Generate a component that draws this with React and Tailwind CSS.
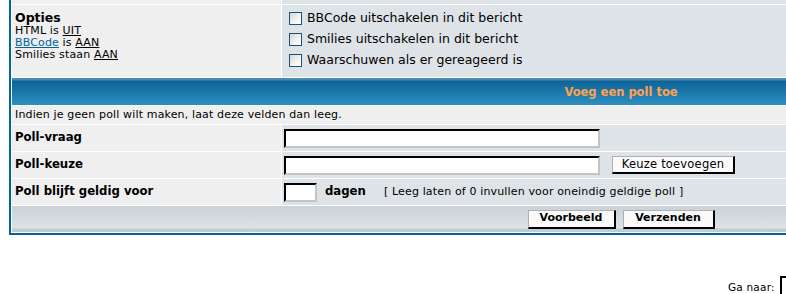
export default function App() {
  const font = "font-['DejaVu_Sans',Verdana,sans-serif]";
  const Check = () => (
    <span className="inline-block w-[13px] h-[13px] border border-[#1c5180] bg-[linear-gradient(135deg,#d6d6d0_0%,#f4f4f0_60%,#ffffff_100%)] shrink-0" />
  );
  const inputCls =
    "bg-white border-t-2 border-l-2 border-b-2 border-r-2 border-t-black border-l-black border-b-[#c4c4c4] border-r-[#c4c4c4]";
  const btnCls =
    "bg-[#fafafa] border-t border-l border-t-[#b0b0b0] border-l-[#b0b0b0] border-b-2 border-r-2 border-b-black border-r-black flex items-center justify-center text-black whitespace-nowrap";
  const small = "text-[11px] tracking-[0.15px]";
  const label = "text-[11.7px] font-bold";
  return (
    <div className={`w-[786px] h-[294px] overflow-hidden bg-white relative ${font}`}>
      <div className="ml-[9px] w-[1224px] border-l-2 border-r-2 border-b-2 border-[#006699] bg-white flex flex-col gap-px px-px pb-px">
        {/* partial top row */}
        <div className="grid grid-cols-[269px_1fr] gap-px h-[4px]">
          <div className="bg-[#efefef]" />
          <div className="bg-[#dee3e7]" />
        </div>
        {/* Opties */}
        <div className="grid grid-cols-[269px_1fr] gap-px h-[72px]">
          <div className="bg-[#efefef] pt-[6px] pl-[3px] text-black">
            <div className="text-[12.5px] font-bold leading-[14px]">Opties</div>
            <div className={`${small} leading-[12px]`}>
              HTML is <span className="underline">UIT</span>
            </div>
            <div className={`${small} leading-[12px]`}>
              <span className="underline text-[#006699]">BBCode</span> is <span className="underline">AAN</span>
            </div>
            <div className={`${small} leading-[12px]`}>
              Smilies staan <span className="underline">AAN</span>
            </div>
          </div>
          <div className="bg-[#dee3e7] pt-[3px] pl-[7px] flex flex-col">
            {[
              "BBCode uitschakelen in dit bericht",
              "Smilies uitschakelen in dit bericht",
              "Waarschuwen als er gereageerd is",
            ].map((t) => (
              <div key={t} className="h-[21px] flex items-center gap-[5px] text-[12.5px] text-black">
                <Check />
                <span>{t}</span>
              </div>
            ))}
          </div>
        </div>
        {/* header */}
        <div className="h-[27px] bg-[linear-gradient(to_bottom,#4a89b0_0px,#4a89b0_2px,#0c6397_3px,#2d8fc0_100%)] flex items-center justify-center">
          <span className="text-[11.5px] font-bold text-[#ffa34f] pt-[2px]">Voeg een poll toe</span>
        </div>
        {/* info */}
        <div className={`h-[18px] bg-[#efefef] flex items-center pl-[3px] ${small} text-black`}>
          Indien je geen poll wilt maken, laat deze velden dan leeg.
        </div>
        {/* Poll-vraag */}
        <div className="grid grid-cols-[269px_1fr] gap-px h-[26px]">
          <div className={`bg-[#efefef] flex items-center pl-[3px] ${label} text-black`}>Poll-vraag</div>
          <div className="bg-[#dee3e7] flex items-center pl-[2px]">
            <div className={`w-[316px] h-[19px] ${inputCls}`} />
          </div>
        </div>
        {/* Poll-keuze */}
        <div className="grid grid-cols-[269px_1fr] gap-px h-[26px]">
          <div className={`bg-[#efefef] flex items-center pl-[3px] ${label} text-black`}>Poll-keuze</div>
          <div className="bg-[#dee3e7] flex items-center pl-[2px]">
            <div className={`w-[316px] h-[19px] ${inputCls}`} />
            <div className={`ml-[12px] w-[123px] h-[18px] text-[11.5px] tracking-[0.2px] ${btnCls}`}>Keuze toevoegen</div>
          </div>
        </div>
        {/* Poll geldig */}
        <div className="grid grid-cols-[269px_1fr] gap-px h-[26px]">
          <div className={`bg-[#efefef] flex items-center pl-[3px] ${label} text-black`}>Poll blijft geldig voor</div>
          <div className="bg-[#dee3e7] flex items-center pl-[2px] text-black">
            <div className={`w-[33px] h-[19px] ${inputCls}`} />
            <span className={`ml-[8px] ${label}`}>dagen</span>
            <span className={`ml-[18px] ${small}`}>[ Leeg laten of 0 invullen voor oneindig geldige poll ]</span>
          </div>
        </div>
        {/* bottom */}
        <div className="h-[26px] bg-[linear-gradient(to_bottom,#c9d2d8_0%,#dde3e7_85%,#c3ccd3_88%,#c3ccd3_100%)] flex items-center justify-center gap-[7px]">
          <div className={`w-[88px] h-[19px] font-bold text-[11px] ${btnCls}`}>Voorbeeld</div>
          <div className={`w-[92px] h-[19px] font-bold text-[11px] ${btnCls}`}>Verzenden</div>
        </div>
      </div>
      {/* Ga naar */}
      <div className="mt-[41px] pl-[728px] flex items-start w-[900px]">
        <span className="text-[10.5px] text-black mt-[4px] whitespace-nowrap shrink-0 tracking-[0.2px]">Ga naar:</span>
        <div className={`ml-[5px] w-[60px] h-[22px] shrink-0 ${inputCls}`} />
      </div>
    </div>
  );
}
